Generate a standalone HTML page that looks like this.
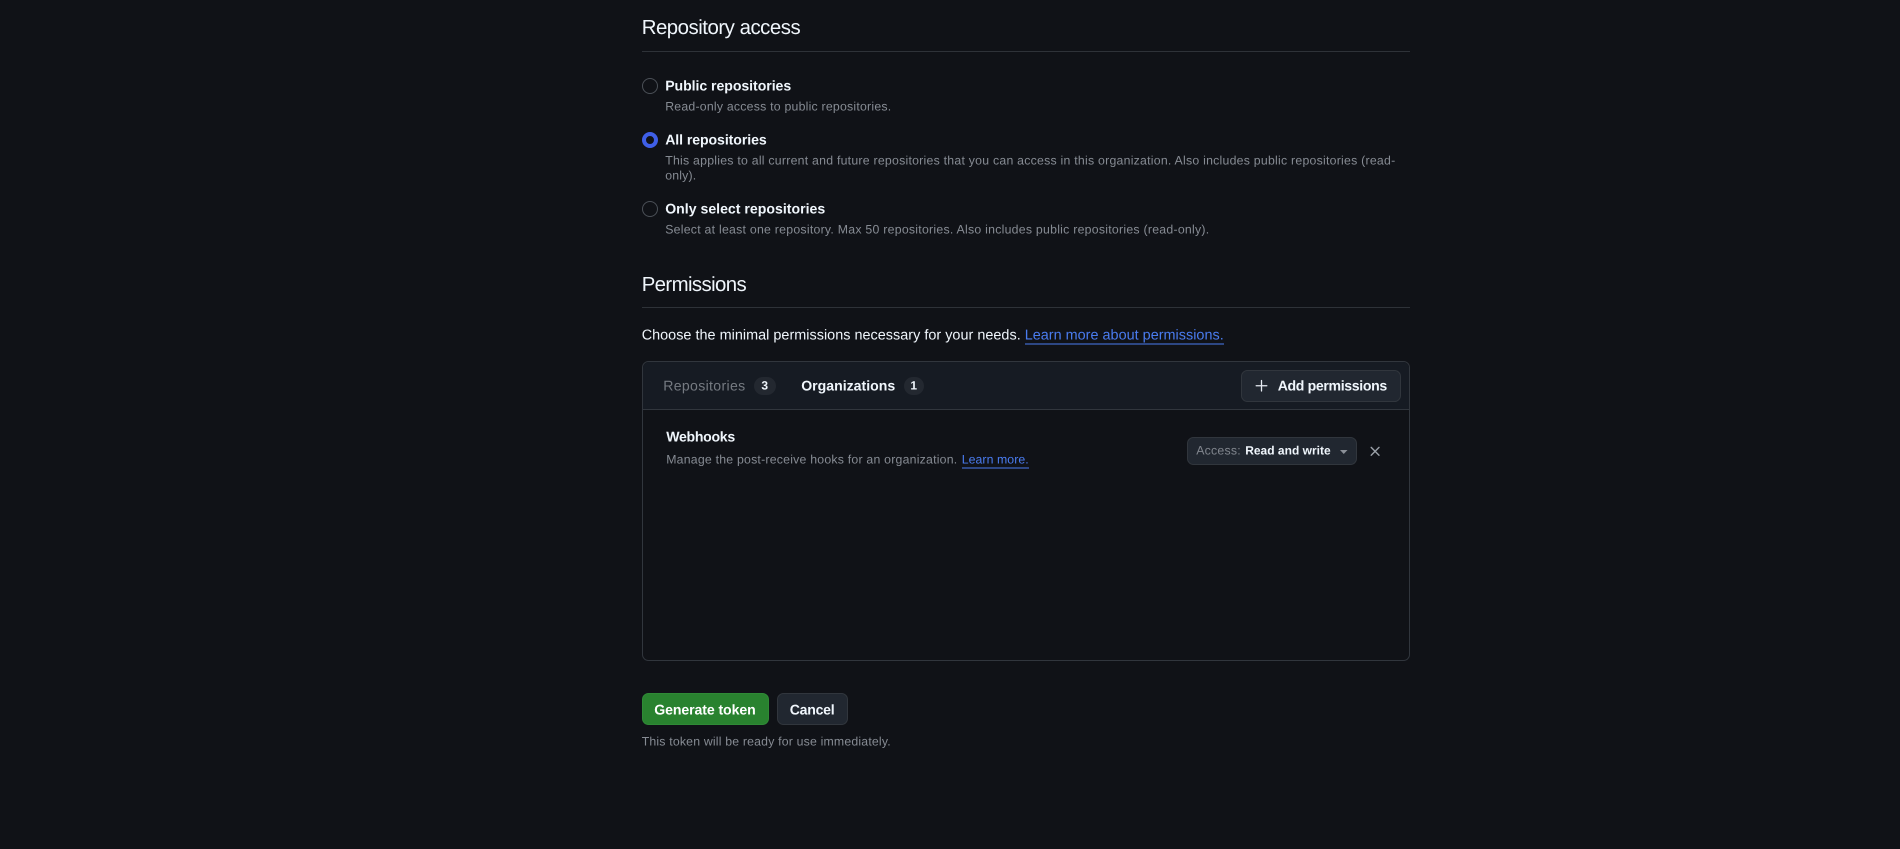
<!DOCTYPE html>
<html lang="en">
<head>
<meta charset="utf-8">
<title>Repository access</title>
<style>
html,body{margin:0;padding:0;background:#101217;width:1900px;height:849px;overflow:hidden}
svg{display:block;position:absolute;left:0;top:0;filter:blur(.3px)}
text{font-family:"Liberation Sans",Arial,sans-serif;text-rendering:geometricPrecision;transform:translate(-.3px,-.4px)}
.h{font-size:20.4px;fill:#f0f6fc}
.b{font-size:14.1px;font-weight:700;fill:#f0f6fc}
.d{font-size:12.3px;fill:#868b93}
.t{font-size:14.4px;fill:#f0f6fc}
.l{fill:#4a7cf0}
</style>
</head>
<body>
<svg width="1900" height="849" viewBox="0 0 1900 849" xmlns="http://www.w3.org/2000/svg">
<rect width="1900" height="849" fill="#101217"/>

<text class="h" x="642" y="34.6" textLength="159">Repository access</text>
<rect x="642" y="51" width="768" height="1" fill="#2e3238"/>

<circle cx="650" cy="86" r="7.5" fill="none" stroke="#4b5057" stroke-width="1"/>
<text class="b" x="665.5" y="91" textLength="126">Public repositories</text>
<text class="d" x="665.5" y="111" textLength="226">Read-only access to public repositories.</text>

<circle cx="650" cy="140" r="6" fill="#101217" stroke="#3f5fe8" stroke-width="4"/>
<text class="b" x="665.5" y="145" textLength="101.5">All repositories</text>
<text class="d" x="665.5" y="165" textLength="730">This applies to all current and future repositories that you can access in this organization. Also includes public repositories (read-</text>
<text class="d" x="665.5" y="180" textLength="31">only).</text>

<circle cx="650" cy="209" r="7.5" fill="none" stroke="#4b5057" stroke-width="1"/>
<text class="b" x="665.5" y="214" textLength="160">Only select repositories</text>
<text class="d" x="665.5" y="234" textLength="544">Select at least one repository. Max 50 repositories. Also includes public repositories (read-only).</text>

<text class="h" x="642" y="291.2" textLength="105">Permissions</text>
<rect x="642" y="307" width="768" height="1" fill="#2e3238"/>

<text class="t" x="642" y="340" textLength="379">Choose the minimal permissions necessary for your needs.</text>
<text class="t l" x="1025" y="340" textLength="199">Learn more about permissions.</text>
<rect x="1025" y="343.5" width="199" height="1" fill="#4a7cf0"/>

<rect x="642.5" y="361.5" width="767" height="299" rx="6" fill="#101217" stroke="#31363d"/>
<path d="M643 409V368a6 6 0 0 1 6-6H1403a6 6 0 0 1 6 6V409Z" fill="#161b23"/>
<rect x="643" y="409" width="766" height="1" fill="#31363d"/>

<text x="663.5" y="391" font-size="14.1" font-weight="400" fill="#757a81" textLength="82">Repositories</text>
<rect x="754" y="377" width="22" height="18" rx="9" fill="#232830"/>
<text x="765" y="390" font-size="12" font-weight="700" fill="#f0f6fc" text-anchor="middle">3</text>
<text class="b" x="801.5" y="391" textLength="94">Organizations</text>
<rect x="904" y="377" width="20" height="18" rx="9" fill="#232830"/>
<text x="914" y="390" font-size="12" font-weight="700" fill="#f0f6fc" text-anchor="middle">1</text>

<rect x="1241.5" y="370.5" width="159" height="31" rx="6" fill="#212730" stroke="#31363d"/>
<path d="M1261.5 380.5V391M1256.2 385.75H1266.8" stroke="#e6ebf2" stroke-width="1.3" fill="none" stroke-linecap="round"/>
<text class="b" x="1278" y="391" textLength="109.5">Add permissions</text>

<text class="b" x="666.5" y="442" textLength="69">Webhooks</text>
<text class="d" x="666.5" y="464" textLength="291">Manage the post-receive hooks for an organization.</text>
<text class="d l" x="962" y="464" textLength="67">Learn more.</text>
<rect x="962" y="467.5" width="67" height="1" fill="#4a7cf0"/>

<rect x="1187.5" y="437.5" width="169" height="27" rx="6" fill="#212730" stroke="#31363d"/>
<text class="d" x="1196.5" y="455" textLength="44.5" style="fill:#80858d">Access:</text>
<text x="1245.5" y="455" font-size="12" font-weight="700" fill="#f0f6fc" textLength="85.5">Read and write</text>
<path d="M1340 450H1347.5L1343.75 454Z" fill="#8b9098"/>
<path d="M1371.2 447.4L1379 455.2M1379 447.4L1371.2 455.2" stroke="#9aa0a8" stroke-width="1.4" fill="none" stroke-linecap="round"/>

<rect x="642.5" y="693.5" width="126" height="31" rx="6" fill="#29822f" stroke="#2f8a36"/>
<text class="b" x="654.5" y="715" textLength="101.5" style="fill:#ffffff">Generate token</text>
<rect x="777.5" y="693.5" width="70" height="31" rx="6" fill="#212730" stroke="#31363d"/>
<text class="b" x="790" y="715" textLength="45">Cancel</text>
<text class="d" x="642" y="746" textLength="249">This token will be ready for use immediately.</text>
</svg>
</body>
</html>
